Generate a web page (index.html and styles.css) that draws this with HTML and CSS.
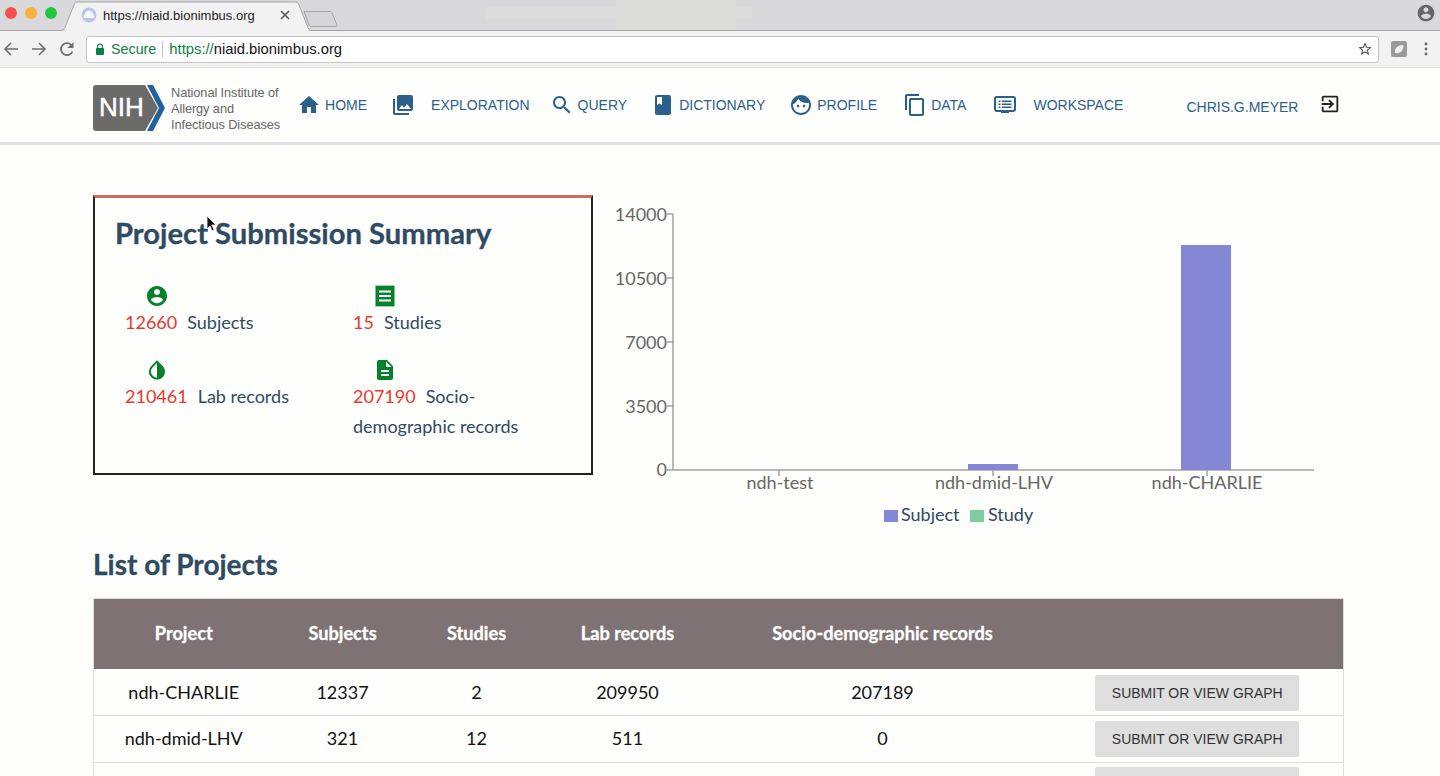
FILE: index.html
```html
<!DOCTYPE html>
<html>
  <head>
    <meta charset="utf-8">
    <title>NIAID Data Hub</title>
    <link rel="stylesheet" href="styles.css">
  </head>
  <body>
    <div class="tabstrip">
      <div class="lights">
        <span class="light red"></span>
        <span class="light amber"></span>
        <span class="light green"></span>
      </div>
      <div class="tab">
        <svg class="tab-shape" width="262" height="31" viewBox="0 0 262 31"><path d="M0 30.500h4c2 0 3-1 4-3L17 5c1-2 2-3 4-3h217c2 0 3 1 4 3l9 22.500c1 2 2 3 4 3h3" fill="#f2f2f2" stroke="#a6a6a6"/><rect x="8" y="30" width="243" height="1" fill="#f2f2f2"/></svg>
        <svg class="favicon" width="16" height="16" viewBox="0 0 16 16"><circle cx="8" cy="8" r="7.500" fill="#b9c8e8"/><path d="M2.500 10.500C3 8 5 3.500 8 3.500s5 4.500 5.500 7c-1 .7-10 .7-11 0z" fill="#f6f7fb"/></svg>
        <span class="tab-title">https://niaid.bionimbus.org</span>
        <svg class="tab-close" width="10" height="10" viewBox="0 0 10 10"><path d="M1 1l8 8M9 1l-8 8" stroke="#555" stroke-width="1.600"/></svg>
      </div>
      <svg class="newtab" width="36" height="18" viewBox="0 0 36 18"><path d="M1 1.500h26c1 0 1.500.5 2 1.500l5 12c.4 1 0 1.500-1 1.500H8c-1 0-1.500-.5-2-1.500L1 1.500z" fill="#d6d6d8" stroke="#a6a6a6"/></svg>
      <div class="strip-spacer"></div>
      <svg class="account" width="20" height="20" viewBox="0 0 24 24"><path fill="#666" d="M12 2C6.480 2 2 6.480 2 12s4.480 10 10 10 10-4.480 10-10S17.520 2 12 2zm0 3c1.660 0 3 1.340 3 3s-1.340 3-3 3-3-1.340-3-3 1.340-3 3-3zm0 14.200c-2.500 0-4.710-1.280-6-3.220.03-1.990 4-3.080 6-3.080 1.990 0 5.970 1.090 6 3.080-1.290 1.940-3.500 3.220-6 3.220z"/></svg>
    </div>

    <div class="toolbar">
      <svg class="tool" width="16" height="16" viewBox="0 0 16 16"><path d="M15 8H2M8 2L2 8l6 6" fill="none" stroke="#6e6e6e" stroke-width="1.600"/></svg>
      <svg class="tool" width="16" height="16" viewBox="0 0 16 16"><path d="M1 8h13M8 2l6 6-6 6" fill="none" stroke="#6e6e6e" stroke-width="1.600"/></svg>
      <svg class="tool" width="16" height="16" viewBox="0 0 16 16"><path d="M13.500 10.500A6 6 0 1 1 12.200 3.800" fill="none" stroke="#6e6e6e" stroke-width="1.800"/><path d="M14.500 1v6h-6z" fill="#6e6e6e"/></svg>
      <div class="omnibox">
        <svg class="lock" width="10" height="12" viewBox="0 0 10 12"><path d="M2.500 5V3.500a2.500 2.500 0 0 1 5 0V5" fill="none" stroke="#0b8043" stroke-width="1.200"/><rect x="1" y="5" width="8" height="7" rx="1" fill="#0b8043"/></svg>
        <span class="secure">Secure</span>
        <span class="url"><span class="scheme">https://</span>niaid.bionimbus.org</span>
        <svg class="star" width="16" height="16" viewBox="0 0 24 24"><path fill="#555" d="M22 9.240l-7.190-.62L12 2 9.190 8.630 2 9.240l5.460 4.730L5.820 21 12 17.270 18.180 21l-1.630-7.030L22 9.240zM12 15.400l-3.760 2.270 1-4.280-3.320-2.880 4.380-.38L12 6.100l1.710 4.040 4.380.38-3.320 2.880 1 4.280L12 15.400z"/></svg>
      </div>
      <span class="extension"><svg width="10" height="10" viewBox="0 0 10 10"><path d="M1 9C0 4 4 1 9.500 1 9.500 6 7 10 1 9z" fill="#f1f1f1"/></svg></span>
      <svg class="menu-dots" width="4" height="14" viewBox="0 0 4 14"><circle cx="2" cy="2" r="1.400" fill="#666"/><circle cx="2" cy="7" r="1.400" fill="#666"/><circle cx="2" cy="12" r="1.400" fill="#666"/></svg>
    </div>

    <nav class="nav">
      <a class="brand">
        <svg class="brand-logo" width="72" height="46" viewBox="0 0 72 46">
          <path d="M3 0h49l13 23-13 23H3c-2 0-3-1-3-3V3c0-2 1-3 3-3z" fill="#6a6a68"/>
          <path d="M54 0h6l12 23-12 23h-6l12-23z" fill="#20639b"/>
          <text x="6" y="31" class="brand-nih">NIH</text>
        </svg>
        <span class="brand-text">National Institute of<br>Allergy and<br>Infectious Diseases</span>
      </a>

      <a class="nav-item item-home">
        <svg class="nav-icon" viewBox="0 0 24 24"><path d="M10 20v-6h4v6h5v-8h3L12 3 2 12h3v8z"/></svg>HOME
      </a>
      <a class="nav-item wide item-explore">
        <svg class="nav-icon" viewBox="0 0 24 24"><path d="M22 16V4c0-1.100-.9-2-2-2H8c-1.100 0-2 .9-2 2v12c0 1.100.9 2 2 2h12c1.100 0 2-.9 2-2zm-11-4l2.030 2.710L16 11l4 5H8l3-4zM2 6v14c0 1.100.9 2 2 2h14v-2H4V6H2z"/></svg>EXPLORATION
      </a>
      <a class="nav-item item-query">
        <svg class="nav-icon" viewBox="0 0 24 24"><path d="M15.500 14h-.79l-.28-.27C15.410 12.590 16 11.110 16 9.500 16 5.910 13.090 3 9.500 3S3 5.910 3 9.500 5.910 16 9.500 16c1.610 0 3.090-.59 4.230-1.570l.27.28v.79l5 4.990L20.490 19l-4.990-5zm-6 0C7.010 14 5 11.990 5 9.500S7.010 5 9.500 5 14 7.010 14 9.500 11.990 14 9.500 14z"/></svg>QUERY
      </a>
      <a class="nav-item item-dict">
        <svg class="nav-icon" viewBox="0 0 24 24"><path d="M18 2H6c-1.100 0-2 .9-2 2v16c0 1.100.9 2 2 2h12c1.100 0 2-.9 2-2V4c0-1.100-.9-2-2-2zM6 4h5v8l-2.500-1.500L6 12V4z"/></svg>DICTIONARY
      </a>
      <a class="nav-item item-profile">
        <svg class="nav-icon" viewBox="0 0 24 24"><path d="M9 11.750c-.69 0-1.250.56-1.250 1.250s.56 1.250 1.250 1.250 1.250-.56 1.250-1.250-.56-1.250-1.250-1.250zm6 0c-.69 0-1.250.56-1.250 1.250s.56 1.250 1.250 1.250 1.250-.56 1.250-1.250-.56-1.250-1.250-1.250zM12 2C6.480 2 2 6.480 2 12s4.480 10 10 10 10-4.480 10-10S17.520 2 12 2zm0 18c-4.410 0-8-3.590-8-8 0-.29.02-.58.05-.86 2.360-1.050 4.230-2.980 5.210-5.370C11.070 8.330 14.050 10 17.420 10c.78 0 1.530-.09 2.250-.26.21.71.33 1.470.33 2.260 0 4.410-3.590 8-8 8z"/></svg>PROFILE
      </a>
      <a class="nav-item item-data">
        <svg class="nav-icon" viewBox="0 0 24 24"><path d="M16 1H4c-1.100 0-2 .9-2 2v14h2V3h12V1zm3 4H8c-1.100 0-2 .9-2 2v14c0 1.100.9 2 2 2h11c1.100 0 2-.9 2-2V7c0-1.100-.9-2-2-2zm0 16H8V7h11v14z"/></svg>DATA
      </a>
      <a class="nav-item wide item-workspace">
        <svg class="nav-icon" viewBox="0 0 24 24"><rect x="2" y="4" width="20" height="14" rx="2" fill="none" stroke="#2b5f8c" stroke-width="2"/><path d="M5.500 7.500h2v1.500h-2zM9 7.500h9.500v1.500H9zM5.500 10.500h2V12h-2zM9 10.500h9.500V12H9zM5.500 13.500h2V15h-2zM9 13.500h9.500V15H9zM8 18h8v2H8z"/></svg>WORKSPACE
      </a>
      <a class="nav-user">CHRIS.G.MEYER</a>
      <svg class="logout" width="22" height="22" viewBox="0 0 24 24"><path d="M10.090 15.590L11.500 17l5-5-5-5-1.410 1.410L12.670 11H3v2h9.670l-2.580 2.590zM19 3H5c-1.110 0-2 .9-2 2v4h2V5h14v14H5v-4H3v4c0 1.100.89 2 2 2h14c1.100 0 2-.9 2-2V5c0-1.100-.9-2-2-2z"/></svg>
    </nav>

    <main class="main">
      <section class="overview">
        <div class="summary">
          <h2 class="summary-title">Project Submission Summary</h2>
          <svg class="cursor" width="12" height="18" viewBox="0 0 12 18"><path d="M1 1v13l3-3 2 5 2-1-2-5h4z" fill="#111" stroke="#fff" stroke-width=".8"/></svg>
          <div class="stats">
            <div class="stat">
              <svg class="stat-icon" viewBox="0 0 24 24"><path d="M12 2C6.480 2 2 6.480 2 12s4.480 10 10 10 10-4.480 10-10S17.520 2 12 2zm0 3c1.660 0 3 1.340 3 3s-1.340 3-3 3-3-1.340-3-3 1.340-3 3-3zm0 14.200c-2.500 0-4.710-1.280-6-3.220.03-1.990 4-3.080 6-3.080 1.990 0 5.970 1.090 6 3.080-1.290 1.940-3.500 3.220-6 3.220z"/></svg>
              <p class="stat-line"><span class="count">12660</span>Subjects</p>
            </div>
            <div class="stat">
              <svg class="stat-icon" viewBox="0 0 24 24"><path fill-rule="evenodd" d="M2.500 2h19v20h-19zM6 6.500v2h12v-2zM6 11v2h12v-2zM6 15.500v2h12v-2z"/><path d="M2.500 1.600h19M2.500 22.400h19" fill="none" stroke="#05812c" stroke-width=".8" stroke-dasharray="1 1"/></svg>
              <p class="stat-line"><span class="count">15</span>Studies</p>
            </div>
            <div class="stat">
              <svg class="stat-icon" viewBox="0 0 24 24"><path d="M17.660 7.930L12 2.270 6.340 7.930c-3.120 3.120-3.120 8.190 0 11.310C7.900 20.800 9.950 21.580 12 21.580c2.050 0 4.100-.78 5.660-2.340 3.120-3.120 3.120-8.190 0-11.310zM12 19.590c-1.600 0-3.110-.62-4.240-1.760C6.620 16.690 6 15.190 6 13.590s.62-3.110 1.760-4.240L12 5.100v14.490z"/></svg>
              <p class="stat-line"><span class="count">210461</span>Lab records</p>
            </div>
            <div class="stat">
              <svg class="stat-icon" viewBox="0 0 24 24"><path d="M14 2H6c-1.100 0-1.990.9-1.990 2L4 20c0 1.100.89 2 1.990 2H18c1.100 0 2-.9 2-2V8l-6-6zm2 16H8v-2h8v2zm0-4H8v-2h8v2zm-3-5V3.500L18.500 9H13z"/></svg>
              <p class="stat-line"><span class="count">207190</span>Socio-demographic records</p>
            </div>
          </div>
        </div>

        <svg class="chart" width="750" height="340" viewBox="593 195 750 340">
          <g class="axis">
            <path d="M673 214v256M673 470h641"/>
            <path d="M667 214h6M667 278h6M667 342h6M667 406h6M667 470h6"/>
          </g>
          <rect x="968" y="464" width="50" height="6" fill="#8486d6"/>
          <rect x="1181" y="245" width="50" height="225" fill="#8486d6"/>
          <g class="axis">
            <path d="M779 470v6M993 470v6M1207 470v6"/>
          </g>
          <g class="tick-y">
            <text x="667" y="221">14000</text>
            <text x="667" y="285">10500</text>
            <text x="667" y="349">7000</text>
            <text x="667" y="413">3500</text>
            <text x="667" y="476">0</text>
          </g>
          <g class="tick-x">
            <text x="780" y="489">ndh-test</text>
            <text x="994" y="489">ndh-dmid-LHV</text>
            <text x="1207" y="489">ndh-CHARLIE</text>
          </g>
          <rect x="884" y="510" width="14" height="12" fill="#8486d6"/>
          <text class="legend" x="901" y="521">Subject</text>
          <rect x="970" y="510" width="14" height="12" fill="#7fcc9f"/>
          <text class="legend" x="988" y="521">Study</text>
        </svg>
      </section>

      <h2 class="list-title">List of Projects</h2>
      <table class="projects">
        <colgroup>
          <col class="col-project">
          <col class="col-subjects">
          <col class="col-studies">
          <col class="col-lab">
          <col class="col-socio">
          <col class="col-action">
        </colgroup>
        <thead>
          <tr>
            <th>Project</th>
            <th>Subjects</th>
            <th>Studies</th>
            <th>Lab records</th>
            <th>Socio-demographic records</th>
            <th></th>
          </tr>
        </thead>
        <tbody>
          <tr>
            <td>ndh-CHARLIE</td>
            <td>12337</td>
            <td>2</td>
            <td>209950</td>
            <td>207189</td>
            <td><button class="graph-btn">SUBMIT OR VIEW GRAPH</button></td>
          </tr>
          <tr>
            <td>ndh-dmid-LHV</td>
            <td>321</td>
            <td>12</td>
            <td>511</td>
            <td>0</td>
            <td><button class="graph-btn">SUBMIT OR VIEW GRAPH</button></td>
          </tr>
        </tbody>
      </table>
      <div class="row-cut">
        <button class="graph-btn">SUBMIT OR VIEW GRAPH</button>
      </div>
    </main>
  </body>
</html>
```

FILE: styles.css
```css
html, body {
  margin: 0;
  padding: 0;
  height: 776px;
  overflow: hidden;
  background: #fefefd;
  font-family: Lato, "Liberation Sans", sans-serif;
}

/* browser frame */
.tabstrip {
  display: flex;
  align-items: flex-start;
  height: 30px;
  background:
    linear-gradient(#dcdcda, #dcdcda) 616px 0 / 120px 30px no-repeat,
    linear-gradient(#dcdcda, #dcdcda) 486px 7px / 266px 12px no-repeat,
    #d9d9dc;
  border-bottom: 1px solid #a6a6a6;
}
.lights {
  display: flex;
  gap: 8px;
  padding: 7px 0 0 5px;
}
.light {
  width: 12px;
  height: 12px;
  border-radius: 50%;
}
.red { background: #f5504e; }
.amber { background: #fbb03b; }
.green { background: #1fc640; }

.tab {
  position: relative;
  display: flex;
  align-items: center;
  width: 250px;
  height: 30px;
  font: 13px "Liberation Sans", sans-serif;
  color: #222;
}
.tab-shape {
  position: absolute;
  left: 0;
  top: 0;
}
.favicon {
  position: relative;
  margin-left: 24px;
}
.tab-title {
  position: relative;
  margin-left: 6px;
  width: 170px;
}
.tab-close {
  position: relative;
  margin-left: 7px;
}
.newtab {
  position: relative;
  margin: 10px 0 0 -4px;
}
.strip-spacer {
  flex: 1;
}
.account {
  margin: 3px 4px 0 0;
}

.toolbar {
  display: flex;
  align-items: center;
  height: 37px;
  background: #f2f2f2;
  border-bottom: 1px solid #dedede;
  padding-left: 3px;
  box-sizing: border-box;
}
.tool {
  margin-right: 12px;
}
.omnibox {
  display: flex;
  align-items: center;
  flex: 1;
  height: 25px;
  margin-left: -1px;
  background: #fff;
  border: 1px solid #c4c4c4;
  border-radius: 3px;
  font: 14px "Liberation Sans", sans-serif;
  color: #111;
}
.lock {
  margin-left: 8px;
}
.secure {
  color: #0b8043;
  margin-left: 6px;
  padding-right: 6px;
  border-right: 1px solid #c4c4c4;
  line-height: 16px;
  font-size: 14.300px;
}
.url {
  margin-left: 6px;
  flex: 1;
  font-size: 14.800px;
}
.scheme {
  color: #0b8043;
}
.star {
  margin-right: 5px;
}
.extension {
  display: flex;
  align-items: center;
  justify-content: center;
  width: 16px;
  height: 16px;
  margin: 0 17px 0 12px;
  background: #9a9a9a;
  border-radius: 2px;
}
.menu-dots {
  margin-right: 12px;
}

/* site nav */
.nav {
  display: flex;
  align-items: center;
  gap: 24px;
  height: 74px;
  padding: 0 0 0 93px;
  border-bottom: 3px solid #e2e2e6;
  font: 14px "Liberation Sans", sans-serif;
  color: #2b5f8c;
}
.brand {
  display: flex;
  align-items: center;
  gap: 6px;
  margin-right: -7px;
  padding-top: 6px;
}
.brand-logo {
  display: block;
}
.brand-nih {
  font: 26px "Liberation Sans", sans-serif;
  fill: #fff;
  stroke: #fff;
  stroke-width: .5;
}
.brand-text {
  padding-top: 2px;
  font-size: 12.800px;
  line-height: 16px;
  color: #666;
  letter-spacing: -0.1px;
}
.nav-item {
  display: flex;
  align-items: center;
  gap: 4px;
}
.nav-item.wide {
  gap: 16px;
}
.nav-icon {
  width: 24px;
  height: 24px;
  fill: #2b5f8c;
}
.item-query {
  margin-left: -4px;
}
.item-data {
  margin-left: 2px;
}
.item-workspace {
  margin-left: 3px;
}
.nav-user {
  margin-left: 39px;
  padding-top: 4px;
}
.logout {
  margin: -2px 0 0 -3px;
  fill: #222;
}

/* page body */
.main {
  padding: 50px 96px 0 93px;
}
.overview {
  display: flex;
  align-items: flex-start;
}
.summary {
  position: relative;
  box-sizing: border-box;
  width: 500px;
  height: 280px;
  padding: 0 20px;
  border: 2px solid #222;
  border-top: 3px solid #c8705a;
}
.cursor {
  position: absolute;
  left: 111px;
  top: 17px;
}
.summary-title {
  margin: 15px 0 0;
  font-size: 29.200px;
  line-height: 40px;
  font-weight: 700;
  color: #2f4a63;
  -webkit-text-stroke: .3px #2f4a63;
}
.stats {
  display: grid;
  grid-template-columns: 228px 1fr;
  row-gap: 21px;
  margin: 31px 0 0 10px;
}
.stat-icon {
  display: block;
  width: 24px;
  height: 24px;
  margin-left: 20px;
  fill: #05812c;
}
.stat-line {
  margin: -1px 0 0;
  font-size: 18px;
  line-height: 30px;
  color: #2f4a63;
}
.count {
  color: #e8392c;
  margin-right: 10px;
}

.chart {
  display: block;
  font-size: 18px;
}
.axis path {
  fill: none;
  stroke: #a3a3a3;
  stroke-width: 1.500;
}
.tick-y text {
  text-anchor: end;
  fill: #666;
}
.tick-x text {
  text-anchor: middle;
  fill: #666;
}
.legend {
  fill: #2f4a63;
}

.list-title {
  margin: 0;
  padding-top: 9px;
  font-size: 28px;
  line-height: 40px;
  font-weight: 700;
  color: #2f4a63;
  -webkit-text-stroke: .3px #2f4a63;
}
.projects {
  width: 1251px;
  margin: 14px 0 0;
  border-collapse: collapse;
  table-layout: fixed;
  border: 1px solid #ddd;
  font-size: 18px;
  color: #111;
}
.col-project { width: 180px; }
.col-subjects { width: 138px; }
.col-studies { width: 130px; }
.col-lab { width: 172px; }
.col-socio { width: 338px; }
.projects th {
  height: 68px;
  padding: 0 0 2px;
  background: #7f7274;
  color: #fff;
  font-size: 18.200px;
  font-weight: 700;
  -webkit-text-stroke: .3px #fff;
}
.projects td {
  height: 46px;
  padding: 0;
  text-align: center;
  border-bottom: 1px solid #ddd;
}
.projects tr + tr td {
  height: 44px;
  padding-bottom: 2px;
}
.graph-btn {
  display: block;
  width: 204px;
  height: 36px;
  margin: 2px auto 0;
  padding: 0;
  border: 0;
  border-radius: 2px;
  background: #dedede;
  color: #333;
  font: 14px "Liberation Sans", sans-serif;
}
/* third row is cut by the bottom of the window, only its button shows */
.row-cut {
  display: flex;
  justify-content: flex-end;
  width: 1251px;
  height: 20px;
  padding: 4px 44px 0 0;
  box-sizing: border-box;
  border: 1px solid #ddd;
  border-width: 0 1px;
  overflow: hidden;
}
.row-cut .graph-btn {
  margin: 0;
  flex: none;
}
```
